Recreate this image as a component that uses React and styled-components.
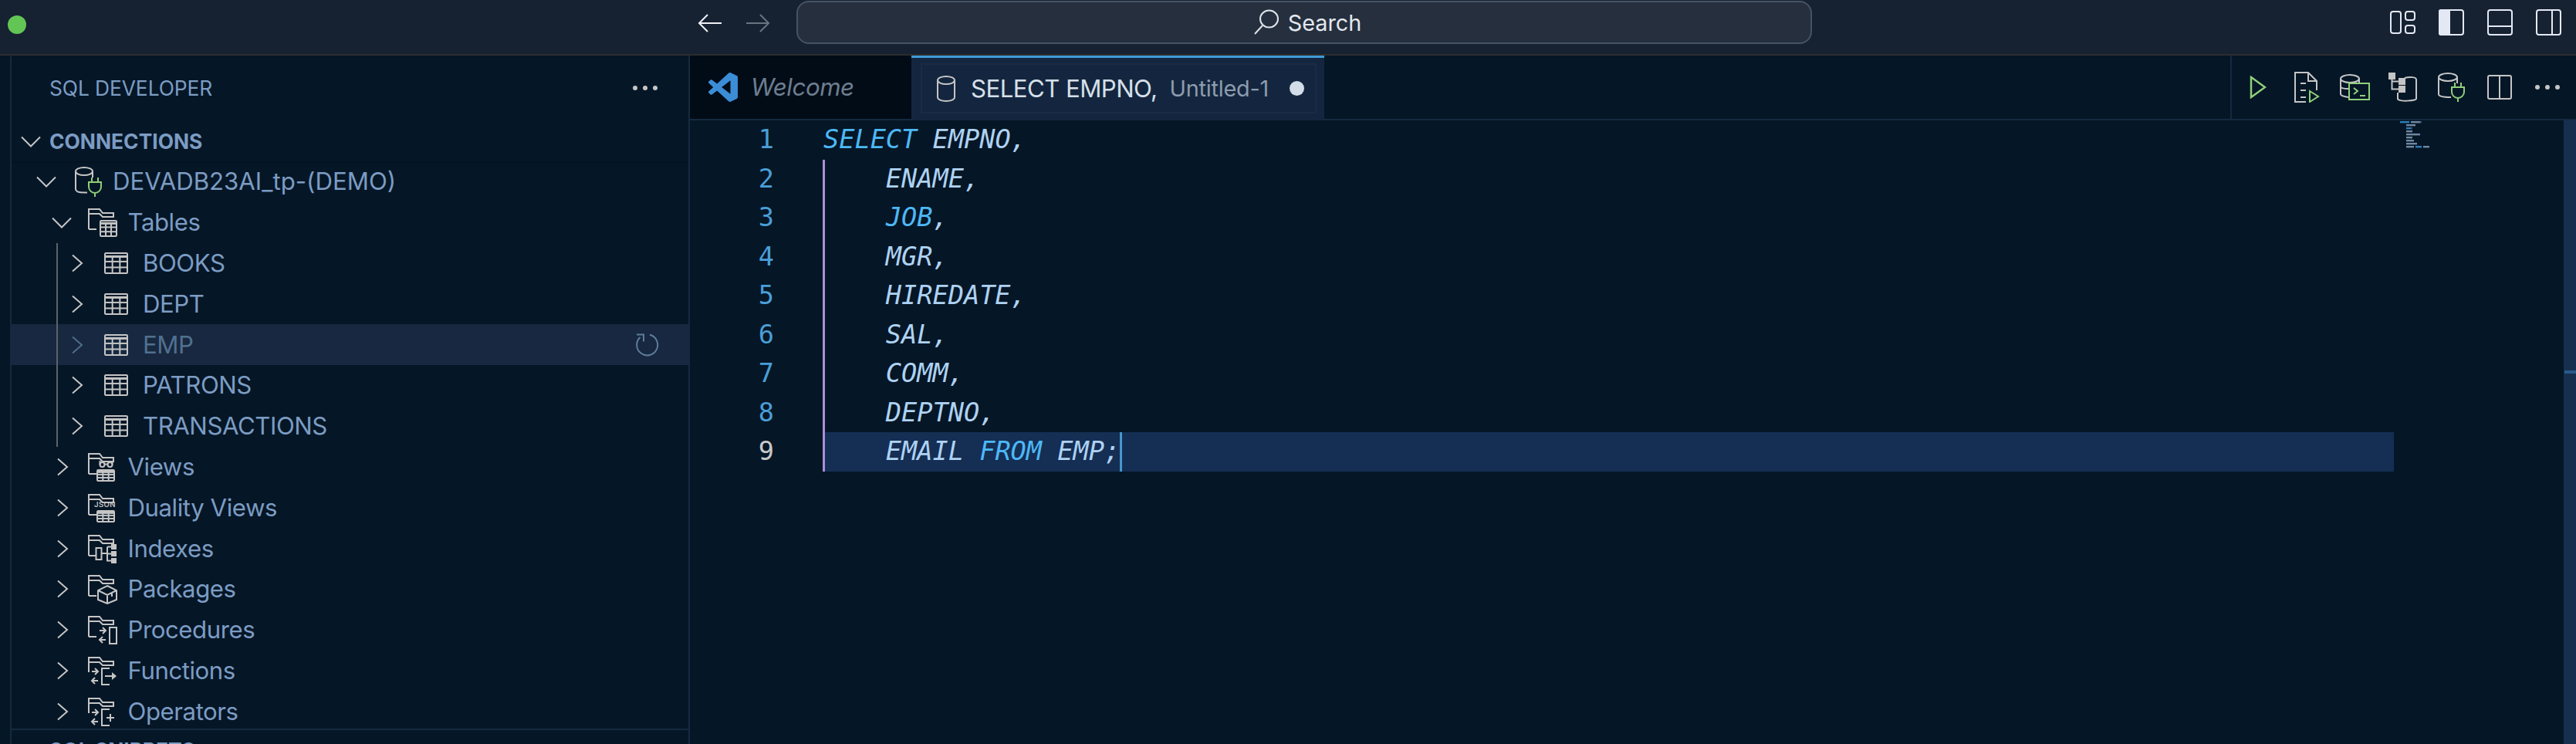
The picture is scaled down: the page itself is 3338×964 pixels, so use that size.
import React from 'react';
import styled, { createGlobalStyle } from 'styled-components';

const Global = createGlobalStyle`
  html, body { margin: 0; padding: 0; height: 100%; overflow: hidden; background: #051626; }
  body { font-family: Inter, "Liberation Sans", sans-serif; }
  #root { height: 100%; }
`;

const Page = styled.div`
  height: 100vh; display: flex; flex-direction: column; overflow: hidden;
  background: #051626; color: #7c9cc3;
`;

/* ---------- title bar ---------- */
const TitleBar = styled.header`
  flex: none; height: 70px; box-sizing: content-box; border-bottom: 2px solid #2c2d2f;
  background: #162231; display: grid; grid-template-columns: 904px 128px 1316px 1fr;
`;
const TrafficLights = styled.div`display: flex; padding: 20px 0 0 10px;`;
const GreenDot = styled.span`width: 24px; height: 24px; border-radius: 50%; background: #62c554;`;
const NavGroup = styled.nav`display: flex; gap: 32px; padding-top: 18px; align-items: flex-start;`;
const SearchBox = styled.div`
  box-sizing: border-box; height: 56px; margin-top: 1px; border: 2px solid #475264; border-radius: 16px;
  background: #252f3e; display: flex; align-items: center; justify-content: center; gap: 11px;
  font-size: 28.8px; color: #e4e7ee; padding-left: 8px;
`;
const LayoutIcons = styled.div`
  display: flex; justify-content: flex-end; gap: 30px; padding: 12px 19px 0 0; align-items: flex-start;
`;

/* ---------- main ---------- */
const Main = styled.div`flex: 1; min-height: 0; display: flex;`;
const ActivityStrip = styled.div`flex: none; width: 13px; border-right: 2px solid #152a40;`;
const Sidebar = styled.aside`
  flex: none; width: 877px; border-right: 2px solid #152a40; overflow: hidden;
  display: flex; flex-direction: column;
`;
const SideHeader = styled.div`
  flex: none; height: 85px; padding: 0 40px 1px 49px; box-sizing: border-box;
  display: flex; align-items: center; justify-content: space-between;
  font-size: 26.4px; letter-spacing: -0.1px; color: #7c9cc3;
`;
const Dots = styled.span`
  display: flex; gap: 7px;
  i { width: 6px; height: 6px; border-radius: 50%; background: ${p => p.$c || '#c5c5c5'}; }
`;
const SectionHead = styled.div`
  flex: none; height: 52px; display: flex; align-items: center; padding-left: 12px; gap: 0;
  font-size: 26.4px; font-weight: 700; color: #7c9cc3;
  box-shadow: 0 1px 2px rgba(0,0,0,.25);
  position: relative;
`;
const SectionLabel = styled.span`margin-left: 11px;`;
const Tree = styled.div`flex: none; height: 735px; overflow: hidden;`;
const Row = styled.div`
  height: 52.8px; display: flex; align-items: center; box-sizing: border-box;
  padding-left: ${p => 32 + p.$level * 19.5}px;
  background: ${p => (p.$hover ? '#172840' : 'transparent')};
  color: ${p => (p.$hover ? '#51708f' : '#7c9cc3')};
  font-size: 31.2px; letter-spacing: ${p => (p.$level === 0 ? '0' : '-0.45px')}; white-space: nowrap;
`;
const IconSlot = styled.span`flex: none; width: 73px; padding-left: 21px; box-sizing: border-box; display: flex; align-items: center;`;
const RowLabel = styled.span`flex: 1;`;
const RowAction = styled.span`display: flex; margin-right: 38px;`;
const Children = styled.div`
  position: relative;
  &::before { content: ''; position: absolute; left: 58px; top: 0; bottom: 0; width: 2px; background: #5c6368; z-index: 1; }
`;
const SnippetHead = styled.div`
  flex: none; height: 52px; border-top: 2px solid #152a40; padding-left: 49px;
  display: flex; align-items: center; font-size: 26.4px; font-weight: 700; color: #7c9cc3;
`;

/* ---------- editor ---------- */
const Editor = styled.section`flex: 1; min-width: 0; display: flex; flex-direction: column;`;
const TabBar = styled.div`
  flex: none; height: 84px; box-sizing: border-box; border-bottom: 2px solid #152a40; display: flex;
`;
const WelcomeTab = styled.div`
  width: 287px; height: 82px; background: #020c17; display: flex; align-items: center; gap: 17px;
  padding-left: 24px; box-sizing: border-box; font-size: 31.2px; letter-spacing: -0.4px; font-style: italic; color: #6d7e90;
`;
const ActiveTab = styled.div`
  width: 535px; height: 84px; background: #14263f; border-top: 3px solid #3f9bd6; box-sizing: border-box;
  padding: 7px 10px 9px 12px; flex: none;
`;
const TabFocus = styled.div`
  height: 100%; border: 2px solid #1a2c44; box-sizing: border-box; display: flex; align-items: center;
  padding-left: 18px; font-size: 31.2px; color: #d6e0ea; white-space: nowrap;
`;
const TabDesc = styled.span`font-size: 28.8px; letter-spacing: -0.2px; color: #8d9cae; margin-left: 16px;`;
const TabTitle = styled.span`margin-left: 19px; letter-spacing: -0.55px;`;
const Modified = styled.span`width: 19px; height: 19px; border-radius: 50%; background: #d2dde7; margin-left: 27px;`;
const TabActions = styled.div`
  margin-left: auto; width: 448px; box-sizing: border-box; border-left: 2px solid #152a40;
  display: flex; align-items: center; padding-left: 3px;
`;
const ActionSlot = styled.span`width: 62.5px; display: flex; justify-content: center; align-items: center;`;
const EditorBody = styled.div`flex: 1; min-height: 0; display: flex;`;
const Gutter = styled.div`
  flex: none; width: 173px; box-sizing: border-box; padding-right: 64px; text-align: right;
  font: 33.6px/50.5px "DejaVu Sans Mono", "Liberation Mono", monospace;
`;
const LineNo = styled.div`height: 50.5px; color: ${p => (p.$active ? '#c8c8c8' : '#4a9fd8')};`;
const Code = styled.div`
  flex: none; width: 2035px;
  font: italic 33.6px/50.5px "DejaVu Sans Mono", "Liberation Mono", monospace; color: #aed2f2;
`;
const Line = styled.div`
  height: 50.5px; white-space: pre;
  background: ${p => (p.$active ? '#152e54' : 'transparent')};
  box-shadow: ${p => (p.$guide ? 'inset 2px 0 0 #ad8ed6, -1px 0 0 #ad8ed6' : 'none')};
`;
const Kw = styled.span`color: #4db8f5;`;
const Caret = styled.span`display: inline-block; width: 3px; height: 50.5px; background: #4597cf; vertical-align: top;`;
const Minimap = styled.div`flex: 1; padding-left: 8px;`;
const Scrollbar = styled.div`flex: none; width: 16px; background: #15304f; padding-top: 324px; box-sizing: border-box;`;
const ScrollMark = styled.div`height: 4px; margin-left: 1px; background: #2a5a8a;`;

/* ---------- icons ---------- */
const G = '#c5c5c5';
const GREEN = '#8fcf7a';

const Stroke = ({ w, h, c = G, sw = 2, children, vb }) => (
  <svg width={w} height={h} viewBox={vb || `0 0 ${w} ${h}`} fill="none" stroke={c} strokeWidth={sw}>
    {children}
  </svg>
);

const Chevron = ({ open, c = G }) => (
  <Stroke w={26} h={26} c={c}>
    <path d={open ? 'M1 7.5 13 19.5 25 7.5' : 'M7 2.5 19 13 7 23.5'} transform={open ? '' : 'translate(1 0)'} />
  </Stroke>
);

const MiniGrid = ({ x, y, w, h }) => {
  const cx = [1, 2].map(i => x + (w * i) / 3);
  const rows = [0.42, 0.71].map(r => y + h * r);
  return (
    <g>
      <rect x={x} y={y} width={w} height={h} rx="1.2" />
      <path d={`M${x} ${y + h * 0.17}H${x + w}`} strokeWidth="3" />
      {rows.map(r => <path key={r} d={`M${x} ${r}H${x + w}`} />)}
      {cx.map(v => <path key={v} d={`M${v} ${y + h * 0.17}V${y + h}`} />)}
    </g>
  );
};

const Folder = ({ short, children }) => (
  <Stroke w={38} h={40}>
    <g transform="translate(0 2)">
      <path d={short ? 'M1 20V1H15L19 6H33V11H19L15 7H1' : 'M1 27V1H15L19 6H33V11H19L15 7H1'} />
      {!short && <path d="M1 27H11" />}
      {children}
    </g>
  </Stroke>
);

const Arrows = ({ x }) => (
  <path d={`M${x} 19H${x + 8}M${x + 4} 15 ${x + 8} 19 ${x + 4} 23M${x + 8} 31H${x}M${x + 4} 27 ${x} 31 ${x + 4} 35`} />
);

const TablesIcon = () => <Folder><MiniGrid x={16} y={16} w={21} h={20} /></Folder>;
const ViewsIcon = () => (
  <Folder>
    <circle cx="18.5" cy="15" r="3" /><circle cx="28.5" cy="15" r="3" />
    <path d="M21.5 14.5h4M15.5 15V10M31.5 15V10" />
    <MiniGrid x={12} y={22} w={22} h={14} />
  </Folder>
);
const DualityIcon = () => (
  <Folder>
    <text x="8" y="17" fontSize="9.5" fontWeight="600" letterSpacing=".4" fill={G} stroke="none" fontFamily="Inter, sans-serif">JSON</text>
    <MiniGrid x={12} y={22} w={22} h={14} />
  </Folder>
);
const IndexesIcon = () => (
  <Folder>
    <rect x="10.5" y="17" width="7" height="15" />
    <path d="M17.5 24H25M25 15.5V33.5H31M25 24.5H31M25 15.5H31" />
    <path d="M30 12h7v7h-7zM30 21h7v7h-7zM30 30h7v7h-7z" fill={G} stroke="none" />
  </Folder>
);
const PackagesIcon = () => (
  <Folder>
    <path d="M25 14 37 20V32L25 37 13 32V20ZM13 20 25 26 37 20M25 26V37M31 23V28" fill="#051626" />
  </Folder>
);
const ProceduresIcon = () => (
  <Folder>
    <Arrows x={15} />
    <rect x="28" y="15" width="9" height="21" />
  </Folder>
);
const FunctionsIcon = () => (
  <Folder short>
    <Arrows x={5} />
    <path d="M28 15H18V36H28M22 25H32" />
    <path d="M31 20 37 25 31 30Z" fill={G} stroke="none" />
  </Folder>
);
const OperatorsIcon = () => (
  <Folder short>
    <Arrows x={5} />
    <path d="M28 15H18V36H28M24 26H34M29 21V31" />
  </Folder>
);

const TableIcon = () => (
  <Stroke w={38} h={40}>
    <g transform="translate(2 6)"><MiniGrid x={1} y={1} w={29} h={26} /></g>
  </Stroke>
);

const Plug = ({ x, y }) => (
  <g transform={`translate(${x} ${y})`} stroke={GREEN}>
    <path d="M4 0V6M12 0V6M0 6H16V12A8 8 0 0 1 0 12ZM8 20V25" />
  </g>
);
const ConnIcon = () => (
  <Stroke w={38} h={40}>
    <ellipse cx="15" cy="7" rx="11" ry="5" />
    <path d="M4 7V30C4 33 9 34.5 15 34.5H19M26 7V15" />
    <Plug x={21} y={15} />
  </Stroke>
);
const DbTabIcon = () => (
  <Stroke w={26} h={36}>
    <ellipse cx="13" cy="7" rx="11" ry="5" />
    <path d="M2 7V29C2 32 7 34 13 34S24 32 24 29V7" />
  </Stroke>
);
const RefreshIcon = () => (
  <Stroke w={30} h={30} c="#5f7d9b">
    <path d="M18 1.8A13.5 13.5 0 1 1 5.5 5M1 1.5H10V10.5" />
  </Stroke>
);
const Back = ({ c, flip }) => (
  <Stroke w={31} h={24} c={c}>
    <path d={flip ? 'M0 12H29M18 1 29 12 18 23' : 'M31 12H2M13 1 2 12 13 23'} />
  </Stroke>
);
const Magnifier = () => (
  <Stroke w={34} h={34} c="#dfe3ea">
    <ellipse cx="20.5" cy="12.5" rx="11.5" ry="11" />
    <path d="M12 21 2 32" />
  </Stroke>
);
const VsLogo = () => (
  <svg width="38" height="38" viewBox="0 0 24 24" fill="#3b8dd6">
    <path d="M23.15 2.587L18.21.21a1.494 1.494 0 0 0-1.705.29l-9.46 8.63-4.12-3.128a.999.999 0 0 0-1.276.057L.327 7.261A1 1 0 0 0 .326 8.74L3.899 12 .326 15.26a1 1 0 0 0 .001 1.479L1.65 17.94a.999.999 0 0 0 1.276.057l4.12-3.128 9.46 8.63a1.492 1.492 0 0 0 1.704.29l4.942-2.377A1.5 1.5 0 0 0 24 20.06V3.939a1.5 1.5 0 0 0-.85-1.352zm-5.146 14.861L10.826 12l7.178-5.448v10.896z" />
  </svg>
);

const L = '#e4e8f5';
const CustomizeIcon = () => (
  <Stroke w={33} h={33} c={L}>
    <rect x="1" y="3" width="13" height="28" rx="3" />
    <rect x="20" y="3" width="12" height="11" rx="3" />
    <rect x="20" y="21" width="12" height="10" rx="3" />
  </Stroke>
);
const SidebarIcon = () => (
  <Stroke w={33} h={34} c={L}>
    <rect x="1" y="1" width="31" height="32" rx="3" />
    <path d="M3 1H14V33H3A2 2 0 0 1 1 31V3A2 2 0 0 1 3 1Z" fill={L} />
  </Stroke>
);
const PanelIcon = () => (
  <Stroke w={33} h={34} c={L}>
    <rect x="1" y="1" width="31" height="32" rx="3" />
    <path d="M1 22H32" />
  </Stroke>
);
const SplitRightIcon = () => (
  <Stroke w={33} h={34} c={L}>
    <rect x="1" y="1" width="31" height="32" rx="3" />
    <path d="M21 1V33" />
  </Stroke>
);

const PlayIcon = () => (
  <Stroke w={22} h={30} c={GREEN} sw={2.5}><path d="M2 2 20 15 2 28Z" /></Stroke>
);
const RunDocIcon = () => (
  <Stroke w={34} h={40}>
    <path d="M16 39H2V1H19L30 12V24M19 1V12H30M9 15H16M9 24H16M9 33H16" />
    <path d="M21 25 32 32 21 39Z" stroke={GREEN} />
  </Stroke>
);
const DbTerminalIcon = () => (
  <Stroke w={40} h={36}>
    <ellipse cx="14" cy="7" rx="12" ry="5" />
    <path d="M2 7V27C2 29 5 30 12 31M26 7V12M2 17C2 19 5 20 12 20" />
    <g stroke={GREEN}>
      <rect x="13" y="13" width="26" height="21" />
      <path d="M19 19 24 23 19 27M27 29H34" />
    </g>
  </Stroke>
);
const DbTreeIcon = () => (
  <Stroke w={38} h={38}>
    <path d="M1 1h7v7H1zM14 8h7v7H14zM14 18h7v7H14z" fill={G} stroke={G} />
    <path d="M4.5 8V21.5H14M4.5 11.5H14M21 7C28 5 36 6 36 9V34C36 37 12 38 12 34V26" />
  </Stroke>
);
const DbPlugIcon = () => (
  <Stroke w={36} h={40}>
    <ellipse cx="14" cy="7" rx="12" ry="5" />
    <path d="M2 7V29C2 32 8 33 18 33M26 7V15" />
    <Plug x={19} y={14} />
  </Stroke>
);
const SplitIcon = () => (
  <Stroke w={32} h={32}>
    <rect x="1" y="1" width="30" height="30" rx="2" />
    <path d="M16 1V31" />
  </Stroke>
);

/* ---------- minimap ---------- */
const MAP = [
  [0, ['SELECT', 'k'], [7, 6, 't'], [13, 1, 'd']],
  [4, ['ENAME,', 't']],
  [4, ['JOB', 'k'], [7, 1, 'd']],
  [4, ['MGR,', 't']],
  [4, ['HIREDATE,', 't']],
  [4, ['SAL,', 't']],
  [4, ['COMM,', 't']],
  [4, ['DEPTNO,', 't']],
  [4, ['EMAIL', 't'], [10, 4, 'k'], [15, 4, 't']],
];
const mapColor = { k: '#2b7fb8', t: '#7088a2', d: '#3f5268' };
const MinimapArt = () => (
  <svg width="60" height="40" viewBox="0 0 60 40">
    {MAP.map((line, i) => {
      const indent = line[0];
      return line.slice(1).map((seg, j) => {
        const isWord = typeof seg[0] === 'string';
        const start = isWord ? indent : seg[0];
        const len = isWord ? seg[0].length : seg[1];
        const c = isWord ? seg[1] : seg[2];
        return <rect key={`${i}-${j}`} x={start * 2} y={i * 4 + 1} width={len * 2} height="2.4" fill={mapColor[c]} />;
      });
    })}
  </svg>
);

/* ---------- data ---------- */
const TABLES = ['BOOKS', 'DEPT', 'EMP', 'PATRONS', 'TRANSACTIONS'];
const FOLDERS = [
  ['Views', ViewsIcon], ['Duality Views', DualityIcon], ['Indexes', IndexesIcon], ['Packages', PackagesIcon],
  ['Procedures', ProceduresIcon], ['Functions', FunctionsIcon], ['Operators', OperatorsIcon],
];
const LINES = [
  <><Kw>SELECT</Kw> EMPNO,</>,
  '    ENAME,',
  <>{'    '}<Kw>JOB</Kw>,</>,
  '    MGR,',
  '    HIREDATE,',
  '    SAL,',
  '    COMM,',
  '    DEPTNO,',
  <>{'    EMAIL '}<Kw>FROM</Kw> EMP;<Caret /></>,
];

const TreeRow = ({ level, open, icon: Icon, label, hover, action }) => (
  <Row $level={level} $hover={hover}>
    <Chevron open={open} c={hover ? '#4f6d8a' : G} />
    <IconSlot><Icon /></IconSlot>
    <RowLabel>{label}</RowLabel>
    {action && <RowAction>{action}</RowAction>}
  </Row>
);

export default function App() {
  const ACTIONS = [PlayIcon, RunDocIcon, DbTerminalIcon, DbTreeIcon, DbPlugIcon, SplitIcon];
  return (
    <Page>
      <Global />
      <TitleBar>
        <TrafficLights><GreenDot /></TrafficLights>
        <NavGroup><Back c="#eef0f6" /><Back c="#6a7480" flip /></NavGroup>
        <SearchBox><Magnifier />Search</SearchBox>
        <LayoutIcons>
          <CustomizeIcon /><SidebarIcon /><PanelIcon /><SplitRightIcon />
        </LayoutIcons>
      </TitleBar>
      <Main>
        <ActivityStrip />
        <Sidebar>
          <SideHeader>SQL DEVELOPER<Dots><i /><i /><i /></Dots></SideHeader>
          <SectionHead><Chevron open /><SectionLabel>CONNECTIONS</SectionLabel></SectionHead>
          <Tree>
            <TreeRow level={0} open icon={ConnIcon} label="DEVADB23AI_tp-(DEMO)" />
            <TreeRow level={1} open icon={TablesIcon} label="Tables" />
            <Children>
              {TABLES.map(t => (
                <TreeRow key={t} level={2} icon={TableIcon} label={t} hover={t === 'EMP'} action={t === 'EMP' ? <RefreshIcon /> : null} />
              ))}
            </Children>
            {FOLDERS.map(([label, Icon]) => (
              <TreeRow key={label} level={1} icon={Icon} label={label} />
            ))}
          </Tree>
          <SnippetHead>SQL SNIPPETS</SnippetHead>
        </Sidebar>
        <Editor>
          <TabBar>
            <WelcomeTab><VsLogo />Welcome</WelcomeTab>
            <ActiveTab>
              <TabFocus>
                <DbTabIcon />
                <TabTitle>SELECT EMPNO,</TabTitle>
                <TabDesc>Untitled-1</TabDesc>
                <Modified />
              </TabFocus>
            </ActiveTab>
            <TabActions>
              {ACTIONS.map((A, i) => <ActionSlot key={i}><A /></ActionSlot>)}
              <ActionSlot><Dots $c="#c5c5c5"><i /><i /><i /></Dots></ActionSlot>
            </TabActions>
          </TabBar>
          <EditorBody>
            <Gutter>
              {LINES.map((_, i) => <LineNo key={i} $active={i === 8}>{i + 1}</LineNo>)}
            </Gutter>
            <Code>
              {LINES.map((l, i) => <Line key={i} $guide={i > 0} $active={i === 8}>{l}</Line>)}
            </Code>
            <Minimap><MinimapArt /></Minimap>
            <Scrollbar><ScrollMark /></Scrollbar>
          </EditorBody>
        </Editor>
      </Main>
    </Page>
  );
}
